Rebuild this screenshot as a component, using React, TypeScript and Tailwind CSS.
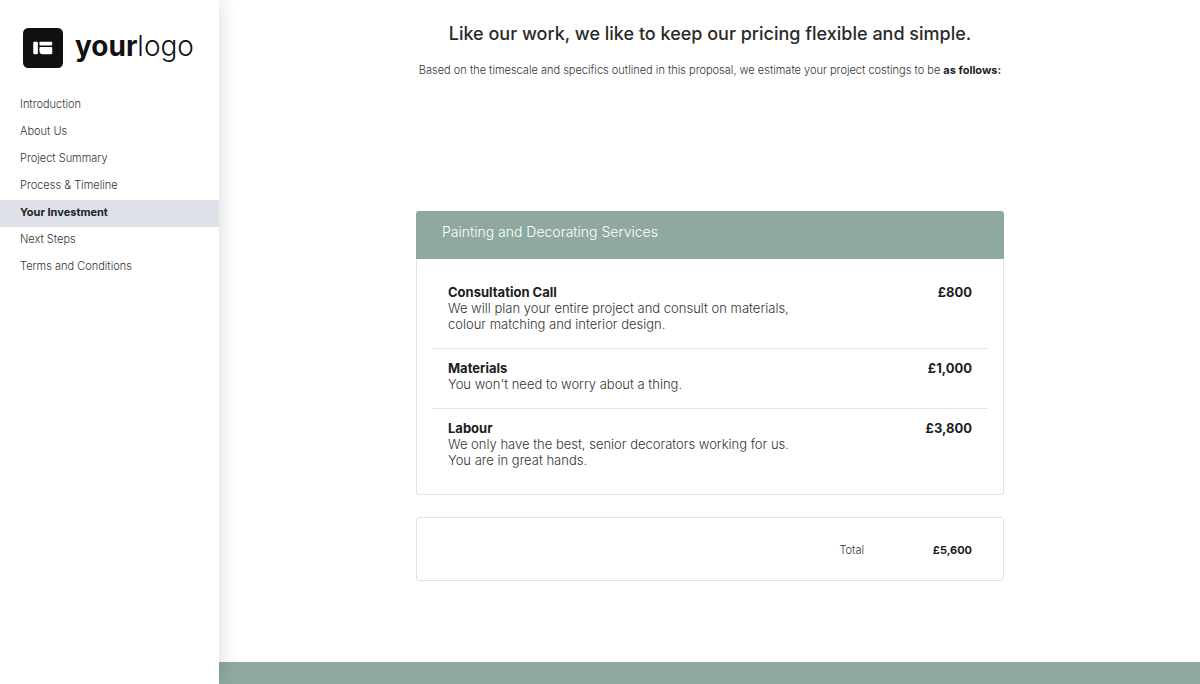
import clsx from "clsx";

const sections = [
  { href: "#introduction", label: "Introduction" },
  { href: "#about", label: "About Us" },
  { href: "#summary", label: "Project Summary" },
  { href: "#process", label: "Process & Timeline" },
  { href: "#investment", label: "Your Investment" },
  { href: "#next-steps", label: "Next Steps" },
  { href: "#terms", label: "Terms and Conditions" },
];

const services = [
  {
    name: "Consultation Call",
    lines: ["We will plan your entire project and consult on materials,", "colour matching and interior design."],
    price: "£800",
  },
  { name: "Materials", lines: ["You won't need to worry about a thing."], price: "£1,000" },
  {
    name: "Labour",
    lines: ["We only have the best, senior decorators working for us.", "You are in great hands."],
    price: "£3,800",
  },
];

function Logo() {
  return (
    <a href="#introduction" className="flex items-start gap-3 pl-[23px] text-[#111111]" aria-label="yourlogo home">
      <svg viewBox="0 0 39 39" className="h-10 w-10 shrink-0" aria-hidden="true">
        <rect width="39" height="39" rx="5" fill="#101010" />
        <rect x="10" y="13.5" width="4.500" height="12" rx="1" fill="#fff" />
        <rect x="16" y="13.500" width="12.500" height="3.500" rx="1" fill="#fff" />
        <path d="M17 18.500H27.500a1 1 0 0 1 1 1v5a1 1 0 0 1-1 1H19a3 3 0 0 1-3-3v-3a1 1 0 0 1 1-1Z" fill="#fff" />
      </svg>
      <span className="text-[28px] leading-9 font-light">
        <span className="font-bold">your</span>logo
      </span>
    </a>
  );
}

function Sidebar() {
  return (
    <aside className="relative z-10 w-[219px] shrink-0 bg-white pt-7 shadow-[0_0_20px_rgba(0,0,0,0.16)]">
      <Logo />
      <nav aria-label="Proposal sections" className="mt-6">
        {sections.map((s) => {
          const isActive = s.href === "#investment";
          return (
            <a
              key={s.href}
              href={s.href}
              aria-current={isActive ? "page" : undefined}
              className={clsx(
                "block h-[27px] pl-5 text-[11px] leading-6",
                isActive ? "bg-[#dee1ea] font-bold text-[#222222]" : "font-light text-[#333333]"
              )}
            >
              {s.label}
            </a>
          );
        })}
      </nav>
    </aside>
  );
}

function ServicesCard() {
  return (
    <section>
      <h2 className="h-12 rounded-t-[3px] bg-[#8fa9a1] pt-[9px] pl-[26px] text-[14px] leading-6 font-light text-white">
        Painting and Decorating Services
      </h2>
      <div className="rounded-b-[3px] border border-t-0 border-[#e2e2e2] px-[15px] pt-3.5 pb-2.5">
        <table className="w-full border-collapse text-[13px] leading-4">
          <tbody>
            {services.map((s) => (
              <tr key={s.name} className="border-b border-[#e4e4e4] last:border-b-0">
                <th scope="row" className="px-4 pt-[11px] pb-4 text-left align-top font-light text-[#333333]">
                  <span className="block font-bold text-[#1c1c20]">{s.name}</span>
                  {s.lines.map((line) => (
                    <span key={line} className="block">
                      {line}
                    </span>
                  ))}
                </th>
                <td className="px-4 pt-[11px] pb-4 text-right align-top font-bold text-[#1c1c20]">{s.price}</td>
              </tr>
            ))}
          </tbody>
        </table>
      </div>
    </section>
  );
}

export default function App() {
  return (
    <div className="flex min-h-screen bg-white font-['Inter',sans-serif]">
      <Sidebar />
      <div className="flex min-w-0 flex-1 flex-col">
        <main className="flex flex-col items-center pt-5 pr-[23px] pb-20 pl-6">
          <h1 className="text-center text-[18px] leading-7 font-medium text-[#2a2a2a]">
            Like our work, we like to keep our pricing flexible and simple.
          </h1>
          <p className="mt-3 text-center text-[11px] leading-5 font-light text-[#333333]">
            Based on the timescale and specifics outlined in this proposal, we estimate your project costings to be{" "}
            <strong className="font-bold text-[#222222]">as follows:</strong>
          </p>

          <div className="mt-[131px] w-full max-w-[588px]">
            <ServicesCard />
            <dl className="mt-[22px] flex h-16 items-center justify-end rounded-[3px] border border-[#e2e2e2] pt-0.5 pr-[31px] text-[11px] leading-4">
              <dt className="font-light text-[#333333]">Total</dt>
              <dd className="w-[108px] text-right font-bold text-[#1c1c20]">£5,600</dd>
            </dl>
          </div>
        </main>
        <footer className="mt-auto h-[22px] bg-[#8fa9a1]" />
      </div>
    </div>
  );
}
